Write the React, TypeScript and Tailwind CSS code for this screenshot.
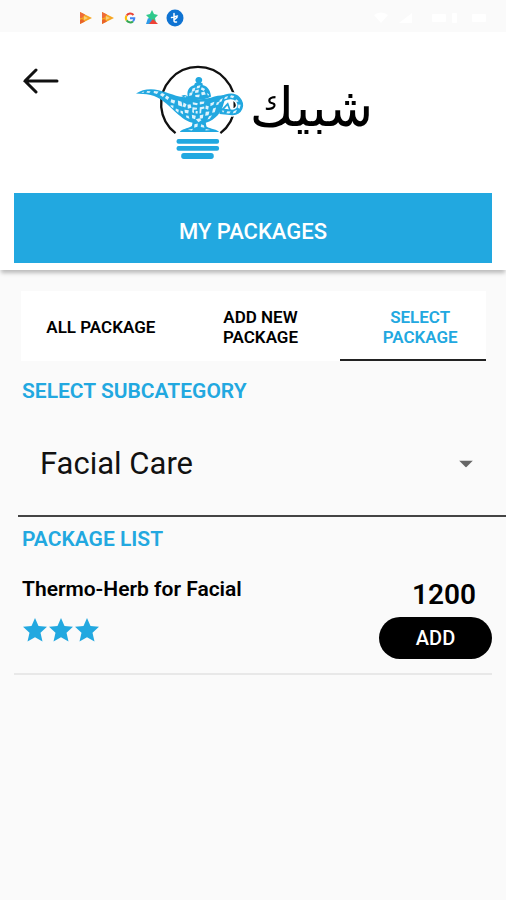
import React, { useState } from "react";

const BLUE = "#22a8e0";

const TABS = [
  { id: "all", label: "ALL PACKAGE" },
  { id: "new", label: "ADD NEW PACKAGE" },
  { id: "select", label: "SELECT PACKAGE" },
];

const PACKAGES = [{ id: 1, name: "Thermo-Herb for Facial", price: 1200, rating: 3 }];

function PlayIcon() {
  return (
    <svg width="16" height="18" viewBox="0 0 16 18" aria-hidden="true">
      <path d="M2 3 14 9 2 15Z" fill="#f6a623" />
      <path d="M2 3 7 5.500 4 9 2 9Z" fill="#ef6c3a" />
      <path d="M2 15 7 12.500 4 10 2 11Z" fill="#e8632b" />
      <path d="M6 7v4l4-2Z" fill="#f9cf7a" />
    </svg>
  );
}

function StatusBar() {
  return (
    <div className="h-8 bg-[#fafafa] flex items-center justify-between pl-[78px] pr-3 pt-1">
      <div className="flex items-center gap-1.5">
        <PlayIcon />
        <PlayIcon />
        <svg width="16" height="18" viewBox="0 0 16 18" fill="none" strokeWidth="2" aria-hidden="true">
          <path d="M11.5 6A4.3 4.3 0 0 0 4.6 6.6" stroke="#ea4335" />
          <path d="M4.6 6.6a4.3 4.3 0 0 0 0 4.8" stroke="#fbbc05" />
          <path d="M4.6 11.4a4.3 4.3 0 0 0 6.4 1" stroke="#34a853" />
          <path d="M11 12.4A4.3 4.3 0 0 0 12.3 9.3H8" stroke="#4285f4" />
        </svg>
        <svg width="16" height="18" viewBox="0 0 16 18" aria-hidden="true">
          <path d="M8 1l2 4 4 1-3 3 1 5H4l1-5-3-3 4-1Z" fill="#2fc98c" />
          <path d="M4 9l4 2-2 4H2Z" fill="#2f9be8" />
          <path d="M9 10l5 5H5Z" fill="#ef4136" />
        </svg>
        <svg width="18" height="18" viewBox="0 0 18 18" aria-hidden="true">
          <circle cx="9" cy="9" r="8.5" fill="#0f73d2" />
          <path
            d="M8 4.500v7q0 2 2.500 1.500M5.500 8.500l6-1.500M8 11l3-2.500"
            fill="none"
            stroke="#fff"
            strokeWidth="1.5"
            strokeLinecap="round"
          />
        </svg>
      </div>
      <svg width="120" height="18" viewBox="0 0 120 18" fill="#fff" aria-hidden="true">
        <path d="M0 6a11 11 0 0 1 14 0L7 14Z" />
        <path d="M38 4v10H25Z" />
        <rect x="58" y="5" width="14" height="8" rx="1" />
        <rect x="78" y="4" width="5" height="10" rx="1" />
        <rect x="98" y="5" width="14" height="8" rx="1" />
      </svg>
    </div>
  );
}

function LampLogo() {
  return (
    <svg width="113" height="98" viewBox="45 40 340 295" fill="none" aria-hidden="true">
      {/* bulb outline */}
      <path d="M173 248A111 111 0 1 1 308 248" stroke="#111" strokeWidth="7" />

      {/* handle */}
      <path d="M284 164C306 142 344 128 360 146C376 164 366 184 344 186L306 182" stroke="#fff" strokeWidth="26" />
      <path d="M284 164C306 142 344 128 360 146C376 164 366 184 344 186L306 182" stroke={BLUE} strokeWidth="17" />
      <path d="M310 182L330 160L338 182" stroke={BLUE} strokeWidth="5" />

      {/* lamp body */}
      <g fill={BLUE}>
        <path d="M54 129C72 117 96 113 122 119C152 126 184 142 206 140C232 148 262 148 290 138C304 134 316 134 326 134L318 158C312 184 294 208 264 217L266 228C278 236 300 236 304 245H186C190 237 208 235 222 227L224 217C200 210 186 196 170 182C150 162 126 139 98 133C82 129 68 131 54 129Z" />
        <path d="M190 136C200 130 206 134 210 138C206 122 212 108 230 103C228 100 234 96 237 96C229 90 234 79 243 79C253 79 257 90 249 96C252 97 258 100 254 103C274 108 278 124 280 138C262 149 228 150 206 144Z" />
      </g>

      {/* mosaic highlights */}
      <g fill="#dff3fc">
        <path d="M108 121l14 2-5 7-10-3ZM132 127l9 4-6 8-9-6ZM88 121l10 1-4 5-9-1ZM146 135l8 5-5 8-8-6ZM70 125l9-2-3 4Z" />
        <path d="M160 146l12 4-3 10-11-5ZM158 164l9 1-1 9-8-7ZM180 150l11 4 3 15-13-5ZM174 174l9 4-2 9-8-7ZM188 180l7 2 1 10-8-5Z" />
        <path d="M197 156l9 5-4 10-7-3ZM209 163l9-2 3 11-11 3ZM200 178l13 1-2 10-10-2ZM204 195l8 1 3 9-9-3Z" />
        <path d="M225 155l15 3-2 6-13-2ZM224 170l14 2-1 5-9 1 1 10-6-3ZM246 170l13-2 1 6-9 2-1 12-5 1ZM222 193l12 3-2 10-9-3ZM234 181l6 1-1 8-6-2Z" />
        <path d="M246 154l14-1-2 7-12 2ZM264 165l9 2-2 11-8-3ZM278 158l12-4-3 9-9 4ZM286 174l9-3-4 14-8 2ZM264 184l11-1-3 11-10 2ZM246 194l11-2-2 11-9 2ZM274 197l9-3-7 11-7 2ZM297 156l8-3-3 9-7 2Z" />
        <path d="M234 206l11-3 6 6-9 6ZM230 221l10-2-1 10-10 3ZM250 221l8 3 2 8-11-2ZM210 238l16-3-4 5ZM264 236l14 3-15 1Z" />
        <path d="M238 106l10-2-3 8-9 2ZM224 114l9-3-3 10-9 3ZM252 110l10 5-4 6-9-4ZM215 127l10-3-3 10-8 2ZM232 120l11-3-1 9-10 1ZM250 126l10-3 4 9-12 2ZM232 133l14-1-2 8-11-1ZM267 127l7 4-3 5ZM198 136l8 2-2 3Z" />
        <path d="M306 148l9-6-3 10-8 5ZM322 139l9-3-3 8-9 2ZM340 134l10 2-4 7-9-3ZM356 146l7 6-6 3-5-5ZM362 162l7 1-3 12-6-3ZM348 182l10-4-4 9-9 2ZM329 182l10 1-4 6-9-1ZM312 180l8 1-4 6Z" />
      </g>
      <circle cx="243" cy="89" r="8" fill={BLUE} />

      {/* screw base */}
      <g fill={BLUE}>
        <rect x="176" y="266" width="128" height="14" rx="6" />
        <rect x="176" y="287" width="128" height="14" rx="6" />
        <rect x="190" y="308" width="98" height="18" rx="8" />
      </g>
    </svg>
  );
}

function Star() {
  return (
    <svg width="26" height="26" viewBox="0 0 26 26" fill={BLUE} aria-hidden="true">
      <path d="M13 1l3.500 8 8.500 .8-6.500 6 2 8.700L13 20.300 5.500 24.500l2-8.700L1 9.800l8.500-.8Z" />
    </svg>
  );
}

export default function App() {
  const [tab, setTab] = useState("select");
  const [category, setCategory] = useState("Facial Care");

  return (
    <div className="min-h-screen bg-[#fafafa] text-black font-['Roboto',sans-serif]">
      <StatusBar />

      {/* HEADER */}
      <header className="bg-white px-3.5 pb-[7px] shadow-[0_4px_4px_-1px_rgba(0,0,0,0.25)]">
        <div className="h-[161px] grid grid-cols-[1fr_auto_1fr]">
          <button type="button" aria-label="Back" className="justify-self-start self-start pl-2 pt-9">
            <svg width="38" height="26" viewBox="0 0 38 26" fill="none" stroke="#111" strokeWidth="3" strokeLinecap="round" aria-hidden="true">
              <path d="M35 13H3M14 2 3 13l11 11" />
            </svg>
          </button>
          <div className="flex items-start gap-1 pt-8">
            <LampLogo />
            <span lang="ar" dir="rtl" className="text-[54px] leading-[88px] font-['DejaVu_Sans',sans-serif]">
              شبيك
            </span>
          </div>
        </div>
        <h1 className="h-[70px] pt-1.5 bg-[#22a8e0] text-white text-[22px] font-medium flex items-center justify-center">
          MY PACKAGES
        </h1>
      </header>

      <main>
        {/* TABS */}
        <nav className="mt-[21px] ml-[21px] mr-5 bg-white overflow-hidden">
          <div role="tablist" className="-mr-3.5 grid grid-cols-3">
            {TABS.map((t) => (
              <button
                key={t.id}
                type="button"
                role="tab"
                aria-selected={tab === t.id}
                onClick={() => setTab(t.id)}
                className={`h-[70px] px-5 pt-1 border-b-2 text-[17px] leading-5 font-semibold ${
                  tab === t.id ? "text-[#22a8e0] border-[#222]" : "border-transparent"
                }`}
              >
                {t.label}
              </button>
            ))}
          </div>
        </nav>

        {/* SUBCATEGORY */}
        <label htmlFor="subcategory" className="block mt-4 ml-[22px] text-[21px] leading-7 font-semibold text-[#22a8e0]">
          SELECT SUBCATEGORY
        </label>
        <div className="relative mt-2 ml-[18px] border-b-2 border-[#444]">
          <select
            id="subcategory"
            value={category}
            onChange={(e) => setCategory(e.target.value)}
            className="appearance-none block w-full h-[102px] pl-[22px] pr-16 text-[31px] text-[#111] bg-transparent"
          >
            <option>Facial Care</option>
          </select>
          <svg width="14" height="7" viewBox="0 0 14 7" className="absolute right-[33px] top-1/2 -translate-y-1/2 pointer-events-none" aria-hidden="true">
            <path d="M0 0h14L7 7Z" fill="#666" />
          </svg>
        </div>

        {/* PACKAGE LIST */}
        <section>
          <h2 className="mt-2 ml-[22px] text-[21px] leading-7 font-semibold text-[#22a8e0]">PACKAGE LIST</h2>
          <ul className="mx-3.5 mt-6">
            {PACKAGES.map((p) => (
              <li key={p.id} className="flex justify-between pl-2 pb-3.5 border-b-2 border-[#e8e8e8]">
                <div>
                  <h3 className="text-[21px] leading-6 font-semibold">{p.name}</h3>
                  <div role="img" aria-label={`${p.rating} stars`} className="flex mt-4">
                    {Array.from({ length: p.rating }, (_, i) => (
                      <Star key={i} />
                    ))}
                  </div>
                </div>
                <div className="flex flex-col items-end">
                  <span className="pr-4 text-[28px] leading-9 font-semibold">{p.price}</span>
                  <button type="button" className="mt-1 w-[113px] h-[42px] rounded-full bg-black text-white text-xl font-medium">
                    ADD
                  </button>
                </div>
              </li>
            ))}
          </ul>
        </section>
      </main>
    </div>
  );
}
